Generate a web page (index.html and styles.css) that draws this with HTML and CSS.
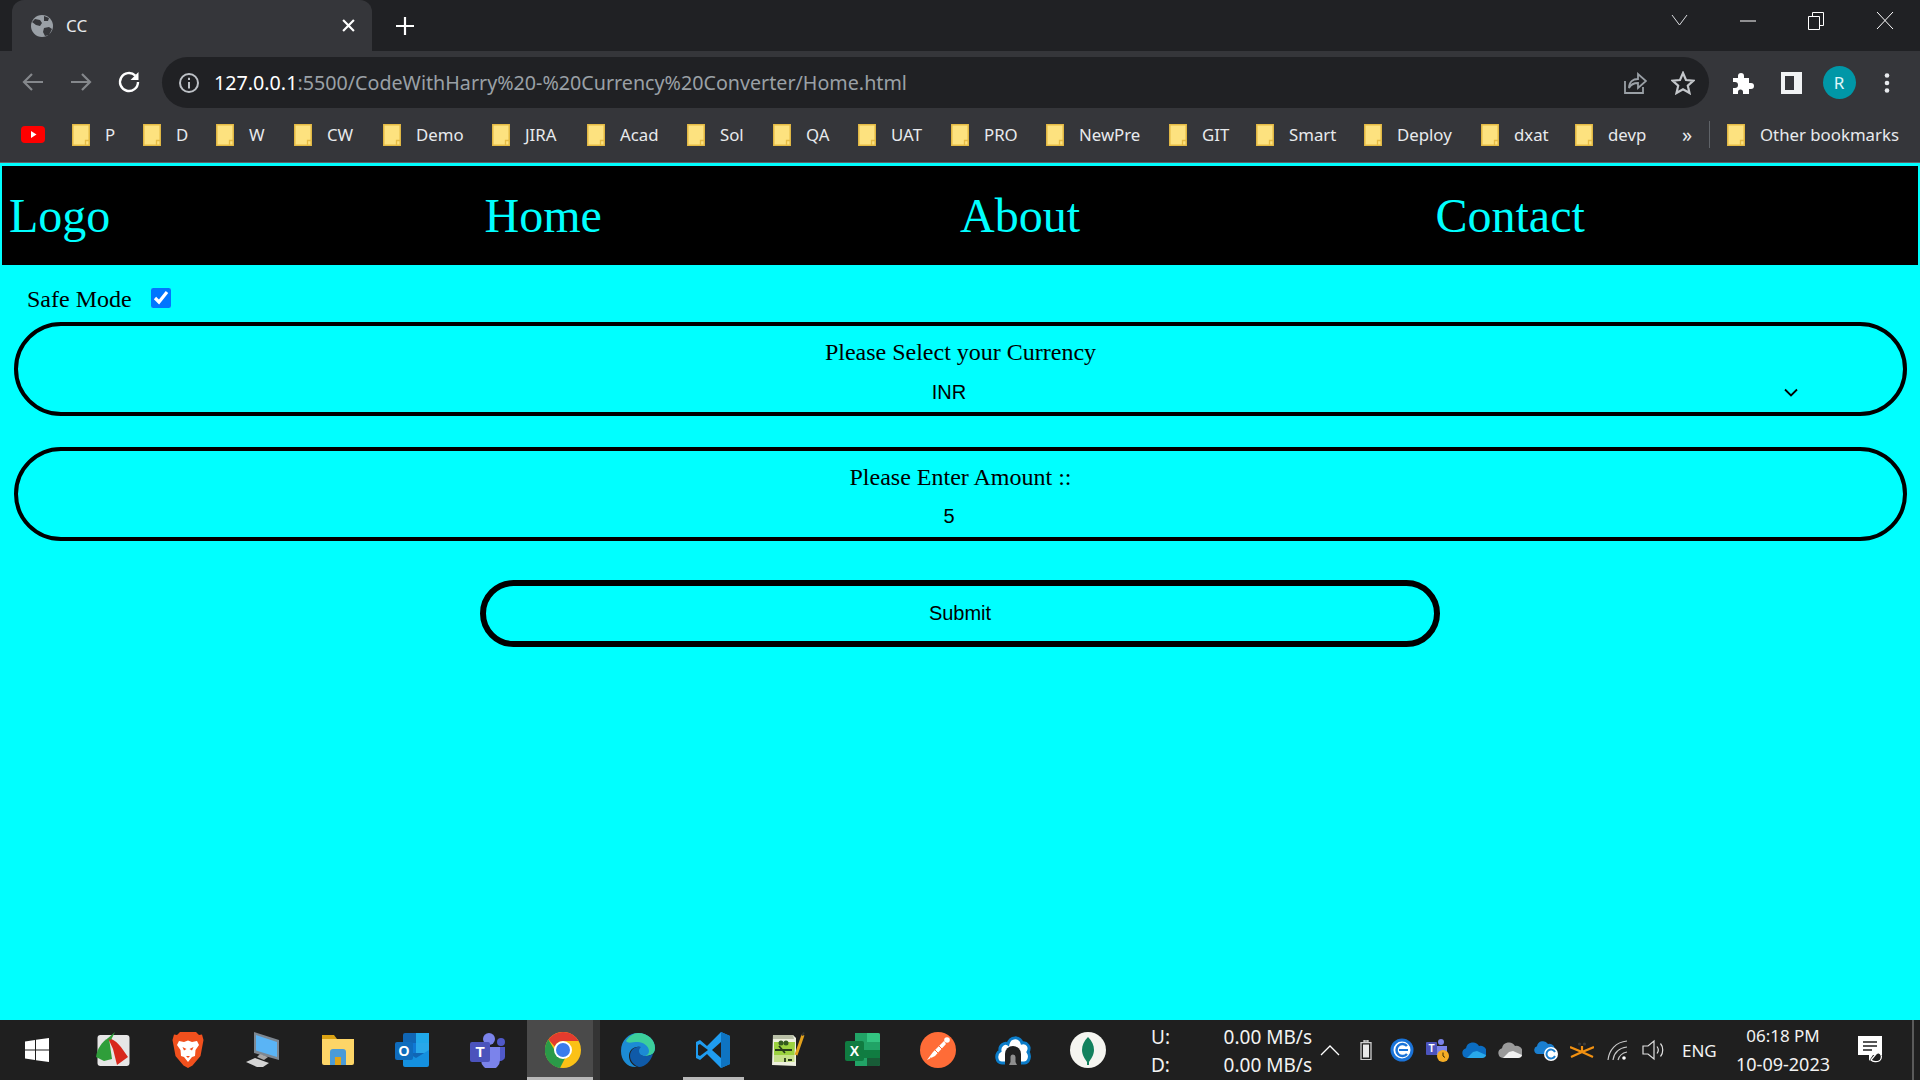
FILE: index.html
```html
<!DOCTYPE html>
<html lang="en">
<head>
<meta charset="utf-8">
<title>CC</title>
<link rel="stylesheet" href="styles.css">
</head>
<body>
<svg class="defs" width="0" height="0" aria-hidden="true">
  <symbol id="folder" viewBox="0 0 18 22">
    <path d="M.8.8h16.400v20.400H.8z" fill="#fde27f" stroke="#e6bc45" stroke-width="1.500"/>
    <path d="M13.500 21v-4.500h3.700" fill="none" stroke="#e6bc45" stroke-width="1.300"/>
  </symbol>
</svg>

<header class="browser">
  <div class="tabstrip">
    <div class="tab">
      <svg class="favicon" viewBox="0 0 24 24"><circle cx="12" cy="12" r="11" fill="#9aa0a6"/><path d="M5 5l5 1 2 3-2 3-4-1-4-3zM14 14l5-1 3 2-3 6-4 1-2-4zM14 2l5 2-1 3-4 0z" fill="#35363a"/></svg>
      <span class="tab-title">CC</span>
      <svg class="tab-close" viewBox="0 0 12 12"><path d="M1 1l10 10M11 1L1 11" stroke="#fff" stroke-width="2"/></svg>
    </div>
    <svg class="newtab" viewBox="0 0 18 18"><path d="M9 0v18M0 9h18" stroke="#fff" stroke-width="2.200"/></svg>
    <div class="winctl">
      <svg viewBox="0 0 68 20"><path d="M27 4l7.500 10L42 4" fill="none" stroke="#dadce0"/></svg>
      <svg viewBox="0 0 68 20"><path d="M26 10h16" stroke="#fff"/></svg>
      <svg viewBox="0 0 68 20"><path d="M26.500 5.500h11v13h-11zM30.500 5V1.500h11v13H38" fill="none" stroke="#fff"/></svg>
      <svg viewBox="0 0 68 20"><path d="M26 1l16 17M42 1L26 18" stroke="#fff" fill="none"/></svg>
    </div>
  </div>

  <div class="toolbar">
    <svg class="tool" viewBox="0 0 48 24"><path d="M34 12H15M23 4l-8 8 8 8" fill="none" stroke="#85888c" stroke-width="2.200"/></svg>
    <svg class="tool" viewBox="0 0 48 24"><path d="M14 12h19M25 4l8 8-8 8" fill="none" stroke="#85888c" stroke-width="2.200"/></svg>
    <svg class="tool" viewBox="0 0 48 24"><path d="M33 12a9 9 0 1 1-2.700-6.400" fill="none" stroke="#fff" stroke-width="2.400"/><path d="M33.500 2v8h-8z" fill="#fff"/></svg>
    <div class="omnibox">
      <svg class="info" viewBox="0 0 22 22"><circle cx="11" cy="11" r="9" fill="none" stroke="#bdc1c6" stroke-width="2"/><path d="M11 10v6.500M11 5.800v2.200" stroke="#bdc1c6" stroke-width="2"/></svg>
      <span class="url"><b>127.0.0.1</b>:5500/CodeWithHarry%20-%20Currency%20Converter/Home.html</span>
      <svg class="omni-share" viewBox="0 0 24 24"><path d="M2 10v12h18v-6" fill="none" stroke="#9aa0a6" stroke-width="1.800"/><path d="M6 17c0-6 4-9 9-9V3l8 7-8 7v-5c-4 0-7 1-9 5z" fill="none" stroke="#9aa0a6" stroke-width="1.800"/></svg>
      <svg class="omni-star" viewBox="0 0 24 24"><path d="M12 2l3 7 7.500.7-5.700 5 1.700 7.300L12 18.200 5.500 22l1.700-7.300-5.700-5L9 9z" fill="none" stroke="#c4c7cb" stroke-width="2.200"/></svg>
    </div>
    <div class="tool-right">
      <svg class="ext" viewBox="0 0 24 24"><path d="M2 7h5V5a3 3 0 0 1 6 0v2h5v5h2a3 3 0 0 1 0 6h-2v5h-6v-2a2.500 2.500 0 0 0-5 0v2H2v-6h2a3 3 0 0 0 0-6H2z" fill="#fff"/></svg>
      <svg class="ext" viewBox="0 0 24 24"><path d="M2 1h21v22H2z" fill="#f1f3f4"/><path d="M6 5h9v14H6z" fill="#35363a"/></svg>
      <span class="avatar">R</span>
      <svg class="ext" viewBox="0 0 24 24"><circle cx="12" cy="4.500" r="2.300" fill="#e8eaed"/><circle cx="12" cy="12" r="2.300" fill="#e8eaed"/><circle cx="12" cy="19.500" r="2.300" fill="#e8eaed"/></svg>
    </div>
  </div>

  <div class="bookmarks">
    <span class="bm"><svg class="yt" viewBox="0 0 24 17"><rect width="24" height="17" rx="4" fill="#ff0000"/><path d="M10 5l5.500 3.500L10 12z" fill="#fff"/></svg></span>
    <span class="bm"><svg class="fd"><use href="#folder"/></svg>P</span>
    <span class="bm"><svg class="fd"><use href="#folder"/></svg>D</span>
    <span class="bm"><svg class="fd"><use href="#folder"/></svg>W</span>
    <span class="bm"><svg class="fd"><use href="#folder"/></svg>CW</span>
    <span class="bm"><svg class="fd"><use href="#folder"/></svg>Demo</span>
    <span class="bm"><svg class="fd"><use href="#folder"/></svg>JIRA</span>
    <span class="bm"><svg class="fd"><use href="#folder"/></svg>Acad</span>
    <span class="bm"><svg class="fd"><use href="#folder"/></svg>Sol</span>
    <span class="bm"><svg class="fd"><use href="#folder"/></svg>QA</span>
    <span class="bm"><svg class="fd"><use href="#folder"/></svg>UAT</span>
    <span class="bm"><svg class="fd"><use href="#folder"/></svg>PRO</span>
    <span class="bm"><svg class="fd"><use href="#folder"/></svg>NewPre</span>
    <span class="bm"><svg class="fd"><use href="#folder"/></svg>GIT</span>
    <span class="bm"><svg class="fd"><use href="#folder"/></svg>Smart</span>
    <span class="bm"><svg class="fd"><use href="#folder"/></svg>Deploy</span>
    <span class="bm"><svg class="fd"><use href="#folder"/></svg>dxat</span>
    <span class="bm"><svg class="fd"><use href="#folder"/></svg>devp</span>
    <span class="bm more">»</span>
    <span class="bm-sep"></span>
    <span class="bm"><svg class="fd"><use href="#folder"/></svg>Other bookmarks</span>
  </div>
</header>

<main class="page">
  <nav class="nav">
    <a>Logo</a><a>Home</a><a>About</a><a>Contact</a>
  </nav>
  <form class="form">
    <label class="safe">Safe Mode <input class="safe-box" type="checkbox" checked></label>
    <div class="field">
      <label class="field-label" for="cur">Please Select your Currency</label>
      <select class="currency" id="cur"><option>INR</option><option>USD</option></select>
    </div>
    <div class="field">
      <label class="field-label" for="amt">Please Enter Amount ::</label>
      <input class="amount" id="amt" type="text" value="5">
    </div>
    <button class="submit" type="button">Submit</button>
  </form>
</main>

<footer class="taskbar">
  <div class="apps">
    <span class="app"><svg class="i24 win" viewBox="0 0 24 24"><path d="M0 3.400 10 2v9.500H0zM11 1.800 24 0v11.500H11zM0 12.500h10V22L0 20.600zM11 12.500h13V24l-13-1.800z" fill="#fff"/></svg></span>
    <span class="app"><svg class="i36" viewBox="0 0 36 36"><rect x="2.500" y="3" width="32" height="31" rx="3" fill="#e6e6e6"/><path d="M1 25C2 17 7 9 14 6l3 21-8 2z" fill="#2f9e3a"/><path d="M13 6c8 1 14 10 20 19l-11 8-4-16z" fill="#d8281c"/><path d="M12 7l8-7-4 8z" fill="#2f9e3a"/></svg></span>
    <span class="app"><svg class="i36" viewBox="0 0 36 36"><path d="M10 0h16l3 3 3-.5 1.500 5.500-3 16-8 9.500L18 36l-4.500-2.500-8-9.500-3-16L4 2.500 7 3z" fill="#f1501d"/><path d="M9 9l5 1 4-1.500 4 1.500 5-1 2 4-3.500 5-.5 6-3 1-4 5-4-5-3-1-.5-6L7 13z" fill="#fff"/><path d="M12.500 15l4 2-2.500 1.500zM23.500 15l-4 2 2.500 1.500zM16 24h4l-2 2z" fill="#f1501d"/></svg></span>
    <span class="app"><svg class="i36" viewBox="0 0 36 36"><path d="M9 0l25 8v20L9 21z" fill="#7d8791"/><path d="M11 3l21 7v15L11 18.500z" fill="#5ab4f5"/><path d="M15 22l8 3-4 3-7-3z" fill="#a8a8a8"/><path d="M1 30l9-4 14 5-6 4H12z" fill="#d4d4d4"/></svg></span>
    <span class="app"><svg class="i36" viewBox="0 0 36 36"><path d="M2 3h12l3 4h-15z" fill="#dba213"/><path d="M2 7h32v24a2 2 0 0 1-2 2H4a2 2 0 0 1-2-2z" fill="#fdd567"/><path d="M10 33V20a3 3 0 0 1 3-3h10a3 3 0 0 1 3 3v13h-5v-8h-6v8z" fill="#4a9bd8"/><path d="M15 25h6v8h-6z" fill="#e0a419"/></svg></span>
    <span class="app"><svg class="i36" viewBox="0 0 36 36"><rect x="8" y="1" width="26" height="30" rx="2" fill="#1066b5"/><path d="M21 1h13v10H21z" fill="#20a8ea"/><path d="M21 11h13v10H21z" fill="#28a8ea"/><path d="M8 11h13v10H8z" fill="#0f78d4"/><path d="M8 18l13 8 13-8v15a2 2 0 0 1-2 2H10a2 2 0 0 1-2-2z" fill="#1490df"/><rect y="10" width="18" height="18" rx="2" fill="#0f6cbd"/><text class="ic-txt" x="9" y="24" text-anchor="middle" font-size="14">O</text></svg></span>
    <span class="app"><svg class="i36" viewBox="0 0 36 36"><circle cx="19" cy="7" r="6" fill="#7b83eb"/><circle cx="31" cy="10" r="4" fill="#5059c9"/><path d="M27 15h8v10a5 5 0 0 1-8 3z" fill="#5059c9"/><path d="M11 15h19v13a9 9 0 0 1-19 0z" fill="#7b83eb"/><rect y="10" width="20" height="20" rx="2" fill="#4b53bc"/><text class="ic-txt" x="10" y="25" text-anchor="middle" font-size="15">T</text></svg></span>
    <span class="app app-active"><svg class="i36 chrome" viewBox="0 0 36 36"><circle cx="18" cy="18" r="18" fill="#fbc116"/><path d="M18 0a18 18 0 0 1 15.600 9H18a9 9 0 0 0-8.300 5.500L3.400 7.500A18 18 0 0 1 18 0z" fill="#e33b2e"/><path d="M3.400 7.500l7 12a9 9 0 0 0 10.500 5L15 36A18 18 0 0 1 3.400 7.500z" fill="#2a9a48"/><circle cx="18" cy="18" r="9" fill="#fff"/><circle cx="18" cy="18" r="7" fill="#3a7cec"/></svg></span>
    <span class="app"><svg class="i36" viewBox="0 0 36 36"><path d="M1 19C1 8 9 1 18 1c10 0 17 7 17 15 0 6-5 8-10 8-4 0-7-2-7-5 0-2 1-3 2-4-6-1-11 3-11 9 0 5 3 9 8 11C8 36 1 29 1 19z" fill="#1c8bd4"/><path d="M6 9c3-5 8-8 12-8 10 0 17 7 17 15 0 6-5 8-10 8 3-1 4-3 4-5 0-5-6-9-11-9-6 0-10 2-12-1z" fill="#3ccf9b"/><path d="M10 24c0-6 5-10 11-9-1 1-2 2-2 4 0 3 3 5 6 5 3 0 6-1 8-2-2 7-8 13-14 13-5-2-9-6-9-11z" fill="#0f5aa8"/></svg></span>
    <span class="app app-open"><svg class="i36" viewBox="0 0 36 36"><path d="M26 0l9 4v28l-9 4-14-14-7 6-4-2V10l4-2 7 6z" fill="#1f9cf0"/><path d="M26 0v36l9-4V4z" fill="#0e74c2"/><path d="M5 12l8 6-8 6-2-1v-10z" fill="#1f1f1f"/><path d="M26 10l-9 8 9 8z" fill="#1f1f1f"/></svg></span>
    <span class="app"><svg class="i36" viewBox="0 0 36 36"><path d="M3 3h20l3 3v28l-24 -1z" fill="#eef0df"/><path d="M3 3h20l1 4H3z" fill="#b8bfa6"/><path d="M4 10h21l-.5 13H4z" fill="#9bd13f"/><path d="M4 23h20.500v7H4z" fill="#c6e08a"/><circle cx="11" cy="11" r="2.500" fill="#33591f"/><circle cx="16" cy="11" r="2.500" fill="#33591f"/><path d="M5 18h17M9 14l6 7M15 26v4M18 28h4" stroke="#26391a" stroke-width="1.800" fill="none"/><path d="M26 23L33 3" stroke="#e3a11c" stroke-width="3"/><path d="M32 3.500L34 .5" stroke="#333" stroke-width="2"/></svg></span>
    <span class="app"><svg class="i36" viewBox="0 0 36 36"><path d="M10 1h23a2 2 0 0 1 2 2v29a2 2 0 0 1-2 2H10z" fill="#21a366"/><path d="M22 1h11a2 2 0 0 1 2 2v7H22z" fill="#33c481"/><path d="M10 18h25v8H10z" fill="#107c41"/><path d="M22 10h13v8H22z" fill="#21a366"/><path d="M22 26h13v6a2 2 0 0 1-2 2H22z" fill="#185c37"/><rect y="9" width="19" height="20" rx="2" fill="#107c41"/><text class="ic-txt" x="9.500" y="24" text-anchor="middle" font-size="14">X</text></svg></span>
    <span class="app"><svg class="i36" viewBox="0 0 36 36"><circle cx="18" cy="18" r="18" fill="#ff6c37"/><path d="M24 9L13 20l-6 8 8-4 11-12z" fill="#fff"/><circle cx="27" cy="8" r="2.800" fill="#fff"/><path d="M15 18l3 3M19 14l3 3M10 26l4 1" stroke="#ff6c37"/></svg></span>
    <span class="app"><svg class="i36" viewBox="0 0 36 36"><path d="M7 31C1 31 0 22 5 19 4 13 10 10 13 12 15 4 25 4 27 11 32 10 36 15 33 20 36 24 34 31 29 31z" fill="#fff" stroke="#0b7cc9" stroke-width="3"/><path d="M10 33V22a8 8 0 0 1 16 0v11z" fill="#1f1f1f"/><path d="M14 33l1.500-3v-5a2.500 2.500 0 0 1 5 0v5l1.500 3z" fill="#8e8e8e"/></svg></span>
    <span class="app"><svg class="i36" viewBox="0 0 36 36"><circle cx="18" cy="18" r="18" fill="#f5f5f0"/><path d="M18 5c4 4 6 8 6 13s-3 9-5 12v3h-2v-3c-2-3-5-7-5-12s2-9 6-13z" fill="#13815d"/></svg></span>
  </div>

  <div class="net">
    <span>U:</span><span class="net-val">0.00 MB/s</span>
    <span>D:</span><span class="net-val">0.00 MB/s</span>
  </div>

  <div class="tray">
    <span class="tr"><svg class="i20" viewBox="0 0 20 20"><path d="M1 15L10 6l9 9" fill="none" stroke="#fff" stroke-width="1.300"/></svg></span>
    <span class="tr"><svg class="i20" viewBox="0 0 20 20"><path d="M8 0h4v2H8zM5 2.700h10v17H5z" fill="#1f1f1f" stroke="#cfcfcf" stroke-width="1.300"/><path d="M7 4.500h6v13H7z" fill="#e8e8e8"/></svg></span>
    <span class="tr"><svg class="i24" viewBox="0 0 24 24"><circle cx="12" cy="12" r="11.500" fill="#1a73d8"/><circle cx="12" cy="12" r="8.500" fill="#fff"/><path d="M17 8a6 6 0 1 0 0 8" fill="none" stroke="#1a73d8" stroke-width="2.500"/><path d="M9 11h9v2H9z" fill="#1a73d8"/></svg></span>
    <span class="tr"><svg class="i24" viewBox="0 0 24 24"><circle cx="15" cy="4" r="3" fill="#7b83eb"/><path d="M9 8h12v9H9z" fill="#7b83eb"/><rect y="4" width="11" height="13" rx="1" fill="#4b53bc"/><text class="ic-txt" x="5.500" y="14" text-anchor="middle" font-size="10">T</text><circle cx="17" cy="18" r="6" fill="#f5ad25"/><path d="M17 14.500V18l2 1.500" stroke="#3a2a00" fill="none"/></svg></span>
    <span class="tr"><svg class="i24" viewBox="0 0 24 16"><path d="M5 16a5 5 0 0 1-1-9.800A7 7 0 0 1 17 4a5 5 0 0 1 3 12z" fill="#0b6dc2"/><path d="M5 16l6-6 4-1 9 4c0 2-2 3-4 3z" fill="#28a8ea"/></svg></span>
    <span class="tr"><svg class="i24" viewBox="0 0 24 16"><path d="M5 16a5 5 0 0 1-1-9.800A7 7 0 0 1 17 4a5 5 0 0 1 3 12z" fill="#9a9a9a"/><path d="M5 16l6-6 4-1 9 4c0 2-2 3-4 3z" fill="#f2f2f2"/></svg></span>
    <span class="tr"><svg class="i24" viewBox="0 0 24 22"><path d="M4 15a4 4 0 0 1-1-7.800A6 6 0 0 1 14 5a4 4 0 0 1 3 10z" fill="#1a7fd0"/><circle cx="17" cy="15" r="7" fill="#fff"/><path d="M21 13a4.500 4.500 0 1 0 0 4" fill="none" stroke="#1a7fd0" stroke-width="2"/></svg></span>
    <span class="tr"><svg class="i24" viewBox="0 0 24 24"><path d="M0 9l12 5 12-5M1 19l11-5 11 5M12 14V8" fill="none" stroke="#f29111" stroke-width="2.200"/><circle cx="9.500" cy="6" r="1.600" fill="#3a3a3a"/><circle cx="14.500" cy="6" r="1.600" fill="#3a3a3a"/></svg></span>
    <span class="tr"><svg class="i24" viewBox="0 0 24 24"><path d="M2 22C3 12 10 4 21 3M7 22c1-7 6-12 14-13M12 22c1-4 4-7 9-8" fill="none" stroke="#c8c8c8" stroke-width="1.200"/><circle cx="18" cy="20" r="1.800" fill="#fff"/></svg></span>
    <span class="tr"><svg class="i24" viewBox="0 0 24 24"><path d="M1 8h5l6-5v18l-6-5H1z" fill="none" stroke="#e0e0e0" stroke-width="1.200"/><path d="M15 8.500c1.500 2 1.500 5 0 7M18.500 5.500c3 3.500 3 9.500 0 13" fill="none" stroke="#e0e0e0" stroke-width="1.200"/></svg></span>
  </div>
  <span class="lang">ENG</span>
  <div class="clock"><span>06:18 PM</span><span class="clock-date">10-09-2023</span></div>
  <span class="notif"><svg class="i26" viewBox="0 0 26 28"><path d="M1 0h24v19H16l-4 6v-6H1z" fill="#fff"/><path d="M6 6h14M6 10h14M6 14h9" stroke="#1f1f1f" stroke-width="1.300"/><path d="M14 24l5-6c2-2 4-1 5 1 1 2 0 5-2 6-2 1-6 1-8-1z" fill="#1f1f1f" stroke="#fff" stroke-width="1.200"/></svg></span>
  <span class="edge-line"></span>
</footer>
</body>
</html>
```

FILE: styles.css
```css
* { box-sizing: border-box; }
html, body { margin: 0; height: 100%; }
body {
  height: 1080px;
  overflow: hidden;
  display: flex;
  flex-direction: column;
  font-family: "Liberation Serif", "Times New Roman", serif;
  background: #00ffff;
  color: #000;
}
.defs { position: absolute; }

/* browser chrome */
.browser {
  height: 163px;
  flex: none;
  background: #35363a;
  border-bottom: 1px solid #5f6368;
  font-family: "Noto Sans", "Open Sans", sans-serif;
  color: #e8eaed;
}
.tabstrip {
  height: 51px;
  background: #202124;
  display: flex;
  align-items: flex-end;
  padding-left: 12px;
}
.tab {
  width: 360px;
  height: 51px;
  background: #35363a;
  border-radius: 12px 12px 0 0;
  display: flex;
  align-items: center;
  padding: 0 17px 0 18px;
}
.favicon { width: 24px; height: 24px; flex: none; }
.tab-title { margin-left: 12px; font-size: 17px; flex: 1; color: #e8eaed; }
.tab-close { width: 13px; height: 13px; }
.newtab { width: 18px; height: 18px; margin: 0 0 16px 24px; flex: none; }
.winctl {
  margin-left: auto;
  display: grid;
  grid-template-columns: repeat(4, 68.500px);
  height: 51px;
  width: 274px;
  margin-right: 1px;
  padding: 11px 0 0;
}
.winctl svg { width: 68px; height: 20px; }

.toolbar {
  height: 57px;
  display: flex;
  padding: 6px 0 0 9px;
}
.tool { width: 48px; height: 24px; margin-top: 13px; flex: none; }
.omnibox {
  width: 1547px;
  height: 51px;
  margin-left: 9px;
  background: #202124;
  border-radius: 26px;
  display: flex;
  align-items: center;
  padding-left: 16px;
  flex: none;
}
.info { width: 22px; height: 22px; flex: none; }
.url { margin-left: 14px; font-size: 19.700px; color: #9aa0a6; white-space: nowrap; flex: 1; }
.url b { font-weight: 400; color: #fff; }
.omni-share { width: 24px; height: 24px; flex: none; }
.omni-star { width: 24px; height: 24px; margin: 0 14px 0 24px; flex: none; }
.tool-right {
  display: grid;
  grid-template-columns: repeat(4, 48px);
  margin-left: 10px;
  height: 51px;
  align-items: center;
  justify-items: center;
}
.ext { width: 24px; height: 24px; }
.avatar {
  width: 33px;
  height: 33px;
  border-radius: 50%;
  background: #0097a7;
  color: #e0f7fa;
  font-size: 17px;
  display: flex;
  align-items: center;
  justify-content: center;
}

.bookmarks {
  height: 54px;
  padding: 0 0 2px 21px;
  display: grid;
  grid-template-columns: 51px 71px 73px 78px 89px 109px 95px 100px 86px 85px 93px 95px 123px 87px 108px 117px 94px 107px 27px 18px 1fr;
  align-items: center;
  font-size: 16.800px;
  color: #e8eaed;
}
.bm { display: flex; align-items: center; white-space: nowrap; }
.yt { width: 24px; height: 17px; }
.fd { width: 18px; height: 22px; margin: 2px 15px 0 0; flex: none; }
.more { font-size: 20px; }
.bm-sep { width: 1px; height: 27px; background: #5f6368; }

/* page */
.page { flex: 1; min-height: 0; background: #00ffff; }
.nav {
  height: 99px;
  margin: 3px 2px 0;
  padding-left: 7px;
  background: #000;
  display: grid;
  grid-template-columns: repeat(4, 475.500px);
  align-items: center;
}
.nav a { font-size: 48px; color: #00ffff; }

.form { display: flex; flex-direction: column; padding: 0 0 0 14px; }
.safe {
  height: 57px;
  padding: 12px 0 0 13px;
  font-size: 24px;
  display: flex;
  align-items: center;
}
.safe-box { width: 20px; height: 20px; margin: 0 0 4px 19px; }
.field {
  width: 1893px;
  height: 94px;
  border: 4px solid #000;
  border-radius: 47px;
  display: flex;
  flex-direction: column;
  padding-top: 13px;
  margin-bottom: 31px;
}
.field-label { font-size: 24px; text-align: center; line-height: 27px; }
.currency {
  appearance: none;
  width: 1696px;
  margin: 13px 0 0 94px;
  height: 26px;
  padding: 0 22px 0 0;
  border: 0;
  background: transparent url("data:image/svg+xml,%3Csvg xmlns='http://www.w3.org/2000/svg' width='14' height='9' viewBox='0 0 14 9'%3E%3Cpath d='M1 1.500l6 6 6-6' fill='none' stroke='%23000' stroke-width='1.800'/%3E%3C/svg%3E") no-repeat right 10px center;
  font: 20px "Liberation Sans", Arial, sans-serif;
  text-align: center;
  color: #000;
}
.amount {
  width: 1678px;
  margin: 12px 0 0 92px;
  height: 26px;
  background: transparent;
  border: 0;
  padding: 0;
  font: 20px "Liberation Sans", Arial, sans-serif;
  text-align: center;
  color: #000;
}
.submit {
  width: 960px;
  height: 67px;
  margin: 8px 0 0 466px;
  background: transparent;
  border: 6px solid #000;
  border-radius: 34px;
  font: 20px "Liberation Sans", Arial, sans-serif;
  color: #000;
}

/* taskbar */
.taskbar {
  height: 60px;
  flex: none;
  background: #1f1f1f;
  display: flex;
  align-items: center;
  font-family: "Noto Sans", "Open Sans", sans-serif;
  color: #f2f2f2;
}
.apps {
  display: grid;
  grid-template-columns: repeat(15, 75px);
  height: 60px;
  flex: none;
}
.app { display: flex; align-items: center; justify-content: center; position: relative; }
.win { margin-left: -2px; }
.app-active { margin-left: 2px; background: #4a4a4a; box-shadow: inset -7px 0 0 #343434; }
.chrome { margin-left: -2px; }
.app-active::after {
  content: "";
  position: absolute;
  left: 0;
  right: 7px;
  bottom: 0;
  height: 3px;
  background: #b8b8b8;
}
.app-open::after {
  content: "";
  position: absolute;
  left: 8px;
  right: 6px;
  bottom: 0;
  height: 3px;
  background: #b8b8b8;
}
.i24 { width: 24px; height: 24px; }
.i36 { width: 36px; height: 36px; }
.i20 { width: 20px; height: 20px; }
.i26 { width: 26px; height: 28px; }
.ic-txt { font-family: "Liberation Sans", Arial, sans-serif; font-weight: 700; fill: #fff; }
.net {
  margin-left: 26px;
  width: 161px;
  display: grid;
  grid-template-columns: 1fr auto;
  font-size: 19px;
  line-height: 28px;
  padding-top: 2px;
  flex: none;
}
.tray {
  display: grid;
  grid-template-columns: repeat(10, 36px);
  align-items: center;
  justify-items: center;
  flex: none;
}
.tr { display: flex; align-items: center; justify-content: center; }
.lang { width: 54px; padding-left: 10px; font-size: 17px; flex: none; }
.clock {
  width: 114px;
  display: flex;
  flex-direction: column;
  align-items: center;
  font-size: 17px;
  line-height: 28px;
  flex: none;
}
.clock-date { font-size: 18px; }
.notif { width: 60px; display: flex; justify-content: center; flex: none; }
.edge-line { width: 2px; height: 60px; margin-left: 12px; background: #5a5a5a; flex: none; }
```
